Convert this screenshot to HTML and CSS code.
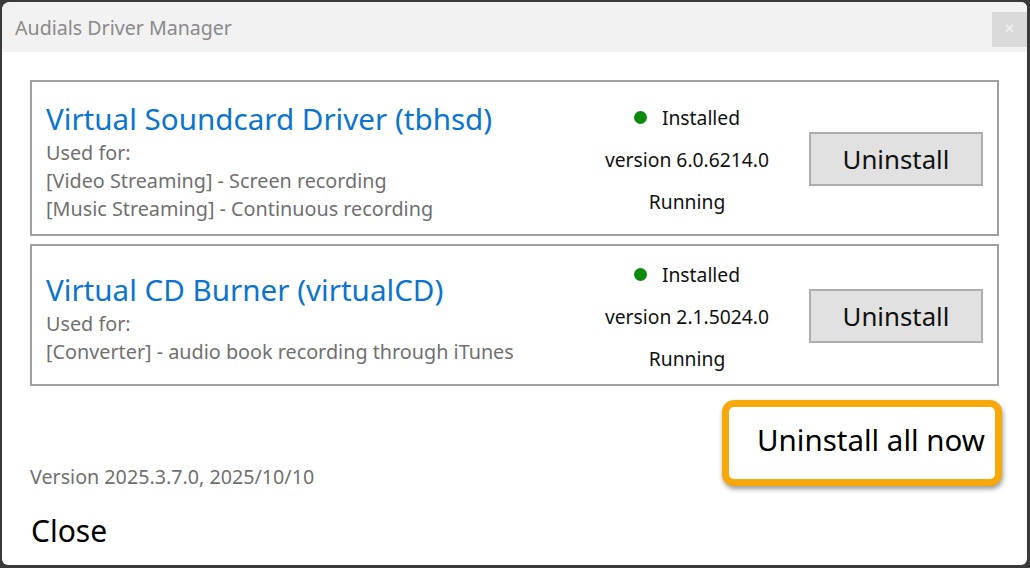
FILE: index.html
```html
<!DOCTYPE html>
<html>

<head>
  <title>Audials Driver Manager</title>
  <link rel="stylesheet" href="styles.css">
</head>

<body>
  <div class="window">
    <div class="title-bar">
      <span class="title-text">Audials Driver Manager</span>
      <button class="close-x">&times;</button>
    </div>

    <div class="content">
      <div class="driver-card card-tall">
        <div class="driver-info">
          <div class="driver-name">Virtual Soundcard Driver (tbhsd)</div>
          <div class="driver-use">Used for:</div>
          <div class="driver-use">[Video Streaming] - Screen recording</div>
          <div class="driver-use">[Music Streaming] - Continuous recording</div>
        </div>
        <div class="driver-status">
          <div><span class="dot"></span>Installed</div>
          <div>version 6.0.6214.0</div>
          <div>Running</div>
        </div>
        <button class="uninstall-btn">Uninstall</button>
      </div>

      <div class="driver-card">
        <div class="driver-info">
          <div class="driver-name">Virtual CD Burner (virtualCD)</div>
          <div class="driver-use">Used for:</div>
          <div class="driver-use">[Converter] - audio book recording through iTunes</div>
        </div>
        <div class="driver-status">
          <div><span class="dot"></span>Installed</div>
          <div>version 2.1.5024.0</div>
          <div>Running</div>
        </div>
        <button class="uninstall-btn">Uninstall</button>
      </div>

      <div class="footer">
        <div class="footer-left">
          <div class="app-version">Version 2025.3.7.0, 2025/10/10</div>
          <div class="close-link">Close</div>
        </div>
        <button class="uninstall-all">Uninstall all now</button>
      </div>
    </div>
  </div>
</body>

</html>
```

FILE: styles.css
```css
body {
  margin: 0;
  padding: 0;
  background-color: #3a3a3a;
  font-family: "Noto Sans", "Open Sans", sans-serif;
  height: 568px;
  overflow: hidden;
}

.window {
  margin: 2px 3px 0 2px;
  height: 563px;
  background-color: #ffffff;
  border-radius: 8px 6px 6px 6px;
  overflow: hidden;
}

.title-bar {
  height: 50px;
  background-color: #f2f2f2;
  display: flex;
  align-items: flex-start;
  justify-content: space-between;
}

.title-text {
  color: #8a8a8a;
  font-size: 19.6px;
  margin: 12px 0 0 13px;
}

.close-x {
  width: 35px;
  height: 35px;
  margin-top: 10px;
  border: none;
  background-color: #dadada;
  color: #f0f0f0;
  font-size: 16px;
  font-weight: bold;
  padding: 0 0 2px 0;
}

.content {
  padding: 28px 28px 0 28px;
}

.driver-card {
  border: 2px solid #a0a0a0;
  height: 138px;
  display: flex;
  align-items: center;
  margin-bottom: 8px;
}

.card-tall {
  height: 152px;
}

.driver-info {
  flex: 1;
  padding-left: 14px;
  padding-top: 8px;
}

.driver-name {
  color: #0a74d0;
  font-size: 29.6px;
  line-height: 36px;
  margin-bottom: 2px;
}

.driver-use {
  color: #707070;
  font-size: 19.8px;
  line-height: 28px;
}

.driver-status {
  width: 200px;
  text-align: center;
  font-size: 19.3px;
  line-height: 42px;
  color: #111111;
  padding-top: 4px;
}

.dot {
  display: inline-block;
  width: 13px;
  height: 13px;
  border-radius: 50%;
  background-color: #0d8a0d;
  margin-right: 15px;
  vertical-align: 1px;
}

.uninstall-btn {
  width: 174px;
  height: 54px;
  margin: 2px 14px 0 22px;
  background-color: #e1e1e1;
  border: 2px solid #adadad;
  font-family: "Noto Sans", "Open Sans", sans-serif;
  font-size: 25.8px;
  color: #111111;
}

.footer {
  display: flex;
  justify-content: space-between;
  align-items: flex-start;
  margin-right: -3px;
}

.footer-left {
  padding-top: 69px;
}

.app-version {
  color: #707070;
  font-size: 19.7px;
  line-height: 28px;
}

.close-link {
  font-size: 30px;
  line-height: 40px;
  margin-top: 20px;
  margin-left: 1px;
  color: #000000;
}

.uninstall-all {
  margin-top: 6px;
  width: 280px;
  height: 86px;
  border: 7px solid #f7a90c;
  border-radius: 12px;
  background-color: #ffffff;
  box-shadow: 1px 3px 5px rgba(0, 0, 0, 0.4);
  font-family: "Noto Sans", "Open Sans", sans-serif;
  font-size: 29.5px;
  color: #000000;
  text-align: right;
  padding: 0 10px 8px 0;
}
```
